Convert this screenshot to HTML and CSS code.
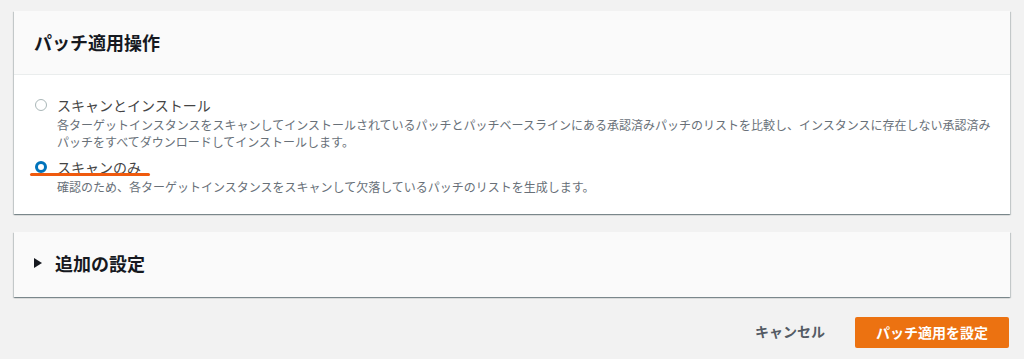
FILE: index.html
```html
<!DOCTYPE html>
<html lang="ja">
<head>
  <meta charset="UTF-8">
  <title>パッチ適用操作</title>
  <link rel="stylesheet" href="styles.css">
</head>
<body>
  <div class="page">
    <!-- Patch operation card -->
    <section class="card">
      <header class="card-header">
        <h2>パッチ適用操作</h2>
      </header>
      <div class="card-body">
        <label class="option">
          <span class="radio"></span>
          <span class="option-text">
            <span class="option-label">スキャンとインストール</span>
            <span class="option-desc">各ターゲットインスタンスをスキャンしてインストールされているパッチとパッチベースラインにある承認済みパッチのリストを比較し、インスタンスに存在しない承認済みパッチをすべてダウンロードしてインストールします。</span>
          </span>
        </label>
        <label class="option">
          <span class="radio checked"></span>
          <span class="option-text">
            <span class="option-label">スキャンのみ</span>
            <span class="option-desc">確認のため、各ターゲットインスタンスをスキャンして欠落しているパッチのリストを生成します。</span>
          </span>
          <span class="marker"></span>
        </label>
      </div>
    </section>

    <!-- Collapsed additional settings -->
    <section class="card collapsed">
      <div class="expander">
        <span class="caret"></span>
        <h2>追加の設定</h2>
      </div>
    </section>

    <div class="actions">
      <button class="btn-link">キャンセル</button>
      <button class="btn-primary">パッチ適用を設定</button>
    </div>
  </div>
</body>
</html>
```

FILE: styles.css
```css
body {
  margin: 0;
  padding: 0;
  background-color: #f2f2f2;
  font-family: "Noto Sans CJK JP", "Noto Sans", sans-serif;
  color: #16191f;
}

.page {
  padding: 11px 14px 0 14px;
  display: flex;
  flex-direction: column;
}

.card {
  background-color: #fff;
  box-shadow: 0 1px 1px 0 rgba(0, 28, 36, 0.3),
    1px 1px 1px 0 rgba(0, 28, 36, 0.15),
    -1px 1px 1px 0 rgba(0, 28, 36, 0.15);
}

.card h2 {
  margin: 0;
  font-size: 18px;
  font-weight: 700;
  line-height: 24px;
  color: #16191f;
}

.card-header {
  background-color: #fafafa;
  height: 64px;
  padding: 0 20px 2px 20px;
  box-sizing: border-box;
  display: flex;
  align-items: center;
  border-bottom: 1px solid #eaeded;
}

.card-body {
  padding: 19px 8px 19px 21px;
  display: flex;
  flex-direction: column;
  gap: 6px;
}

/* Radio options */
.option {
  position: relative;
  display: flex;
  gap: 10px;
  align-items: flex-start;
}

.radio {
  flex: none;
  width: 10px;
  height: 10px;
  margin-top: 5px;
  border: 1px solid #aab7b8;
  border-radius: 50%;
  background-color: #fff;
}

.radio.checked {
  width: 6px;
  height: 6px;
  border: 3px solid #0073bb;
}

.option-text {
  flex: none;
  display: flex;
  flex-direction: column;
  width: 944px;
}

.option-label {
  font-size: 14px;
  line-height: 22px;
  color: #444;
}

.option-desc {
  font-size: 12px;
  line-height: 17px;
  color: #687078;
}

/* Hand-drawn highlight under the selected option */
.marker {
  position: absolute;
  left: -5px;
  top: 17px;
  width: 120px;
  height: 3px;
  border-radius: 2px;
  background-color: #ef5a0e;
}

/* Additional settings */
.collapsed {
  margin-top: 18px;
  background-color: #fafafa;
}

.expander {
  height: 65px;
  padding: 0 20px 4px 20px;
  box-sizing: border-box;
  display: flex;
  align-items: center;
  gap: 13px;
}

.caret {
  width: 0;
  height: 0;
  border-top: 5px solid transparent;
  border-bottom: 5px solid transparent;
  border-left: 8px solid #16191f;
}

.actions {
  display: flex;
  justify-content: flex-end;
  align-items: center;
  gap: 30px;
  margin-top: 20px;
  padding-right: 1px;
}

.btn-link,
.btn-primary {
  font-family: "Noto Sans CJK JP", "Noto Sans", sans-serif;
  font-size: 14px;
  font-weight: 700;
  border: none;
  cursor: pointer;
  line-height: 20px;
}

.btn-link {
  background: none;
  color: #545b64;
  padding: 0 0 3px 0;
}

.btn-primary {
  background-color: #ec7211;
  color: #fff;
  height: 31px;
  width: 154px;
  border-radius: 2px;
  padding: 0 0 2px 0;
}
```
